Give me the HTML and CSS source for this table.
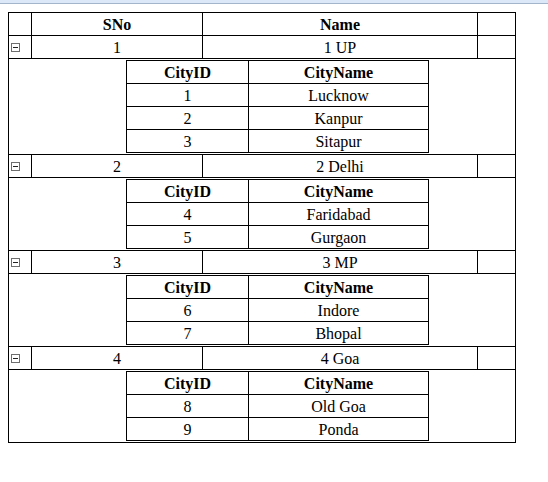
FILE: index.html
```html
<!DOCTYPE html>
<html>
<head>
<meta charset="utf-8">
<link rel="stylesheet" href="styles.css">
</head>
<body>
<div class="topbar"></div>
<table class="grid">
  <colgroup><col class="c1"><col class="c2"><col class="c3"><col class="c4"></colgroup>
  <tr><th></th><th>SNo</th><th>Name</th><th></th></tr>
  <tr><td class="tg"><span class="toggle"></span></td><td>1</td><td>1 UP</td><td></td></tr>
  <tr><td colspan="4" class="nest">
    <table class="inner">
      <colgroup><col class="i1"><col class="i2"></colgroup>
      <tr><th>CityID</th><th>CityName</th></tr>
      <tr><td>1</td><td>Lucknow</td></tr>
      <tr><td>2</td><td>Kanpur</td></tr>
      <tr><td>3</td><td>Sitapur</td></tr>
    </table>
  </td></tr>
  <tr><td class="tg"><span class="toggle"></span></td><td>2</td><td>2 Delhi</td><td></td></tr>
  <tr><td colspan="4" class="nest">
    <table class="inner">
      <colgroup><col class="i1"><col class="i2"></colgroup>
      <tr><th>CityID</th><th>CityName</th></tr>
      <tr><td>4</td><td>Faridabad</td></tr>
      <tr><td>5</td><td>Gurgaon</td></tr>
    </table>
  </td></tr>
  <tr><td class="tg"><span class="toggle"></span></td><td>3</td><td>3 MP</td><td></td></tr>
  <tr><td colspan="4" class="nest">
    <table class="inner">
      <colgroup><col class="i1"><col class="i2"></colgroup>
      <tr><th>CityID</th><th>CityName</th></tr>
      <tr><td>6</td><td>Indore</td></tr>
      <tr><td>7</td><td>Bhopal</td></tr>
    </table>
  </td></tr>
  <tr><td class="tg"><span class="toggle"></span></td><td>4</td><td>4 Goa</td><td></td></tr>
  <tr><td colspan="4" class="nest">
    <table class="inner">
      <colgroup><col class="i1"><col class="i2"></colgroup>
      <tr><th>CityID</th><th>CityName</th></tr>
      <tr><td>8</td><td>Old Goa</td></tr>
      <tr><td>9</td><td>Ponda</td></tr>
    </table>
  </td></tr>
</table>
</body>
</html>
```
FILE: styles.css
```css
html, body { margin: 0; padding: 0; background: #fff; }
body { font-family: "Liberation Serif", "Times New Roman", serif; font-size: 16px; color: #000; }
.topbar { height: 3px; background: #dce8f8; border-bottom: 1px solid #a3b5cb; }
.grid {
  margin: 8px 0 0 8px;
  border-collapse: collapse;
  table-layout: fixed;
  width: 507px;
  border: 1px solid #000;
}
.grid col.c1 { width: 23px; }
.grid col.c2 { width: 171px; }
.grid col.c3 { width: 275px; }
.grid col.c4 { width: 38px; }
.grid th, .grid td {
  border: 1px solid #000;
  padding: 1px 0 0 0;
  height: 21px;
  line-height: 21px;
  text-align: center;
  vertical-align: middle;
}
.grid th { font-weight: bold; }
.grid td.tg { text-align: left; }
.toggle {
  display: block;
  box-sizing: border-box;
  width: 9px; height: 9px;
  margin-left: 2px;
  border: 1px solid #6e6e6e;
  position: relative;
}
.toggle::after {
  content: "";
  position: absolute;
  left: 1px; right: 1px; top: 3px;
  height: 1px;
  background: #222;
}
.grid td.nest { padding: 1px 0; text-align: left; height: auto; line-height: normal; }
.inner {
  margin-left: 117px;
  border-collapse: collapse;
  table-layout: fixed;
  width: 302px;
  border: 1px solid #000;
}
.inner col.i1 { width: 122px; }
.inner col.i2 { width: 180px; }
```
